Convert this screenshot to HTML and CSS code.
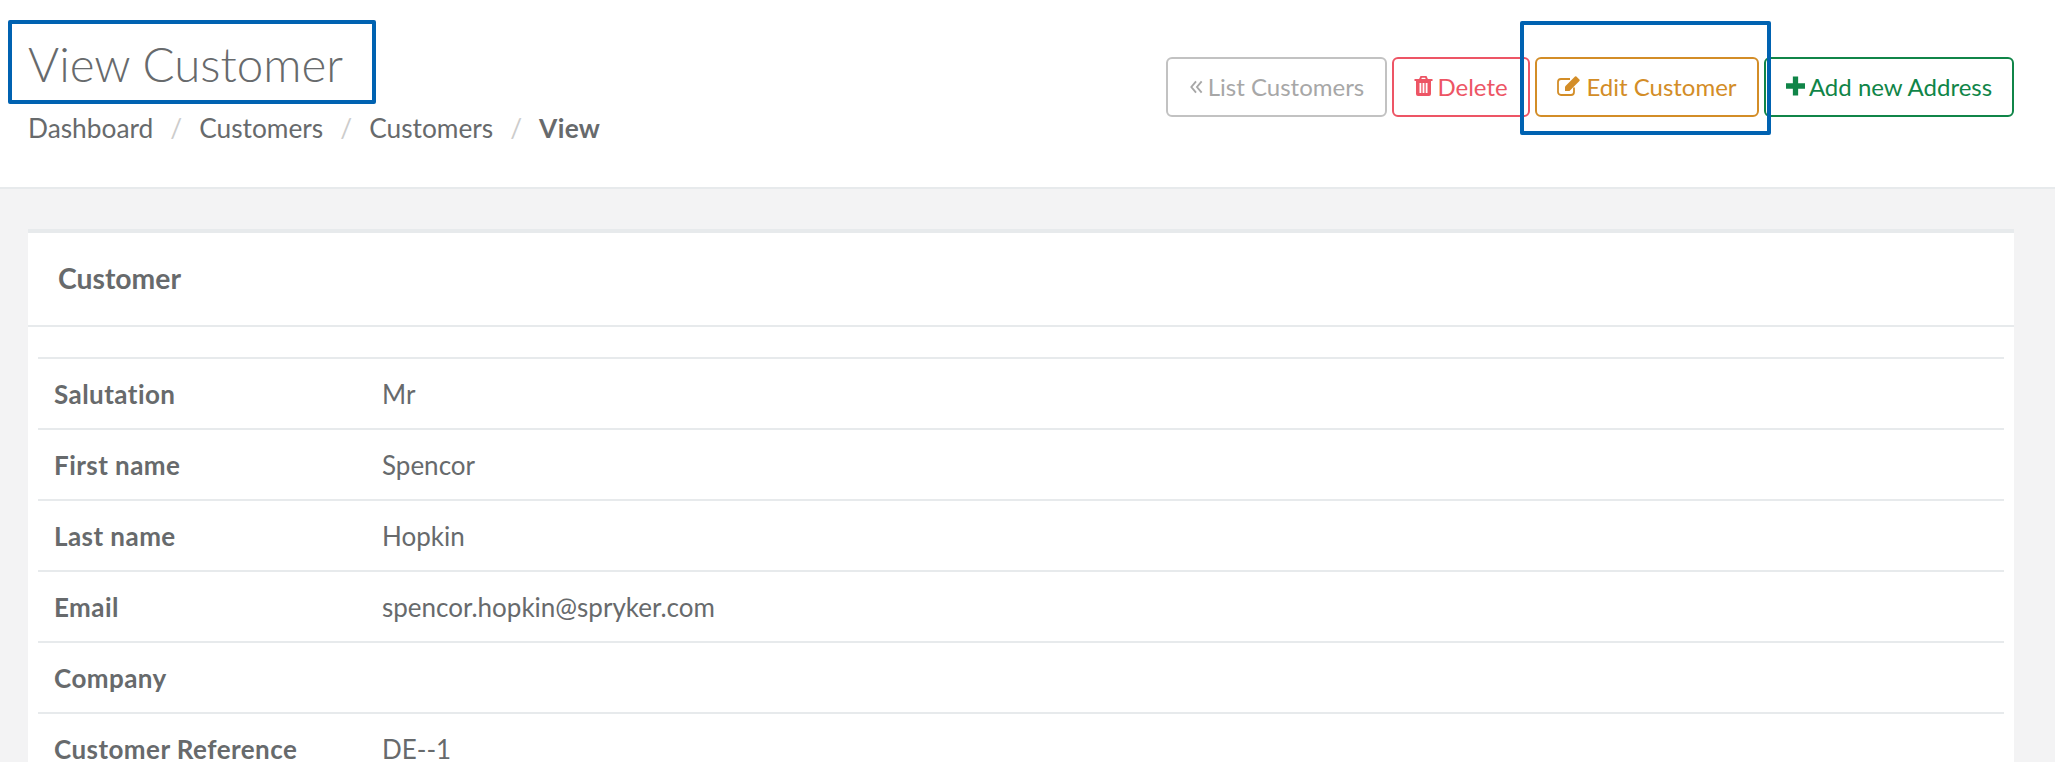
FILE: index.html
```html
<!DOCTYPE html>
<html lang="en">
<head>
    <meta charset="UTF-8">
    <title>View Customer</title>
    <link rel="stylesheet" href="styles.css">
</head>
<body>
    <!-- Page heading -->
    <div class="page-heading">
        <div class="heading-left">
            <h2 class="page-title">View Customer</h2>
            <ol class="breadcrumb">
                <li>Dashboard</li>
                <li class="sep">/</li>
                <li>Customers</li>
                <li class="sep">/</li>
                <li>Customers</li>
                <li class="sep">/</li>
                <li class="active">View</li>
            </ol>
        </div>
        <div class="actions">
            <a class="btn btn-list">
                <svg class="icon icon-angles" viewBox="0 0 16 16"><path d="M7.500 2 2.500 8l5 6M13.500 2 8.500 8l5 6" fill="none" stroke="currentColor" stroke-width="2"/></svg>
                List Customers
            </a>
            <a class="btn btn-delete">
                <svg class="icon" viewBox="0 0 18 20"><path fill="currentColor" fill-rule="evenodd" d="M6 0h6l1.400 3H18v2h-1.500v13a2 2 0 0 1-2 2h-11a2 2 0 0 1-2-2V5H0V3h4.600zM6.800 3h4.400l-.6-1.300H7.400zM5 7v10h1.800V7zm3.100 0v10h1.800V7zm3.100 0v10H13V7z"/></svg>
                Delete
            </a>
            <a class="btn btn-edit">
                <svg class="icon icon-edit" viewBox="0 0 24 20"><path fill="none" stroke="currentColor" stroke-width="1.800" d="M17 11.500V16a3 3 0 0 1-3 3H4a3 3 0 0 1-3-3V6a3 3 0 0 1 3-3h9"/><path fill="currentColor" d="M8 10.500 18 .6a1 1 0 0 1 1.400 0l3 3a1 1 0 0 1 0 1.400L12.500 15H8z"/></svg>
                Edit Customer
            </a>
            <a class="btn btn-add">
                <svg class="icon" viewBox="0 0 18 18"><path fill="currentColor" d="M6.500 0h5v6.500H18v5h-6.500V18h-5v-6.500H0v-5h6.500z"/></svg>
                Add new Address
            </a>
        </div>
    </div>

    <!-- Customer card -->
    <div class="content">
        <div class="card">
            <div class="card-title">Customer</div>
            <div class="card-body">
                <table class="details">
                    <tr><th>Salutation</th><td>Mr</td></tr>
                    <tr><th>First name</th><td>Spencor</td></tr>
                    <tr><th>Last name</th><td>Hopkin</td></tr>
                    <tr><th>Email</th><td>spencor.hopkin@spryker.com</td></tr>
                    <tr><th>Company</th><td></td></tr>
                    <tr><th>Customer Reference</th><td>DE--1</td></tr>
                </table>
            </div>
        </div>
    </div>

    <!-- Blue highlight boxes -->
    <div class="mark mark-title"></div>
    <div class="mark mark-edit"></div>
</body>
</html>
```

FILE: styles.css
```css
/* General Styles */
html, body {
    height: 762px;
    overflow: hidden;
}
body {
    margin: 0;
    position: relative;
    font-family: "Lato", sans-serif;
    font-size: 26px;
    color: #676a6c;
    background: #f3f3f4;
}

/* Page heading */
.page-heading {
    display: flex;
    justify-content: space-between;
    height: 187px;
    padding: 0 41px 0 28px;
    background: white;
    border-bottom: 2px solid #e7eaec;
}
.page-title {
    margin: 36px 0 0;
    font-size: 47.500px;
    line-height: 56px;
    font-weight: 300;
}
.breadcrumb {
    display: flex;
    margin: 20px 0 0;
    padding: 0;
    list-style: none;
    font-size: 26.300px;
    line-height: 32px;
}
.breadcrumb .sep {
    margin: 0 17px;
    color: #ccc;
}
.breadcrumb .active {
    font-weight: 700;
    letter-spacing: .3px;
}

/* Buttons */
.actions {
    display: flex;
    gap: 5px;
    margin-top: 57px;
}
.btn {
    display: flex;
    align-items: center;
    justify-content: center;
    gap: 4px;
    box-sizing: border-box;
    height: 60px;
    padding-bottom: 2px;
    border: 2px solid;
    border-radius: 6px;
    background: white;
    font-size: 24px;
}
.btn-list {
    width: 221px;
    color: #a7a7a7;
    border-color: #c2c2c2;
}
.btn-delete {
    width: 138px;
    color: #ed5565;
    border-color: #ed5565;
}
.btn-edit {
    width: 224px;
    color: #d38d27;
    border-color: #d38d27;
    gap: 5px;
}
.btn-add {
    width: 250px;
    color: #108548;
    border-color: #108548;
}
.icon {
    width: 19px;
    height: 20px;
    flex: none;
}
.icon-angles {
    width: 15px;
    margin-top: 2px;
}
.icon-edit {
    width: 24px;
}

/* Card */
.content {
    padding: 40px 41px 0 28px;
}
.card {
    height: 600px;
    background: white;
    border-top: 4px solid #e7eaec;
}
.card-title {
    height: 90px;
    padding: 0 0 2px 30px;
    border-bottom: 2px solid #e7eaec;
    font-size: 28.300px;
    font-weight: 700;
    line-height: 90px;
}
.card-body {
    padding: 30px 10px 0;
}

/* Details table */
.details {
    width: 100%;
    border-collapse: collapse;
    table-layout: fixed;
}
.details tr {
    height: 71px;
    border-top: 2px solid #e7eaec;
}
.details th, .details td {
    padding: 0 16px;
    text-align: left;
}
.details th {
    width: 296px;
    font-weight: 700;
    letter-spacing: .45px;
}
.details td {
    font-weight: 400;
}

/* Blue highlight boxes */
.mark {
    position: absolute;
    box-sizing: border-box;
    border: 4px solid #0062b1;
    border-radius: 2px;
}
.mark-title {
    left: 8px;
    top: 20px;
    width: 368px;
    height: 84px;
}
.mark-edit {
    left: 1520px;
    top: 21px;
    width: 251px;
    height: 114px;
}
```
